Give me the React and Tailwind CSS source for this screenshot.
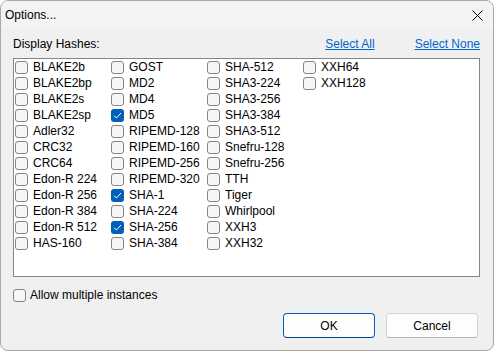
import React from "react";

const columns = [
  ["BLAKE2b", "BLAKE2bp", "BLAKE2s", "BLAKE2sp", "Adler32", "CRC32", "CRC64", "Edon-R 224", "Edon-R 256", "Edon-R 384", "Edon-R 512", "HAS-160"],
  ["GOST", "MD2", "MD4", "MD5", "RIPEMD-128", "RIPEMD-160", "RIPEMD-256", "RIPEMD-320", "SHA-1", "SHA-224", "SHA-256", "SHA-384"],
  ["SHA-512", "SHA3-224", "SHA3-256", "SHA3-384", "SHA3-512", "Snefru-128", "Snefru-256", "TTH", "Tiger", "Whirlpool", "XXH3", "XXH32"],
  ["XXH64", "XXH128"],
];

const checked = ["MD5", "SHA-1", "SHA-256"];

const Box = ({ on }) =>
  on ? (
    <span className="w-[13px] h-[13px] rounded-[3px] bg-[#005fb8] flex items-center justify-center shrink-0">
      <svg width="9" height="7" viewBox="0 0 9 7">
        <path d="M1 3.6 L3.4 6 L8 1" fill="none" stroke="white" strokeWidth="1" />
      </svg>
    </span>
  ) : (
    <span className="w-[13px] h-[13px] rounded-[3px] border border-[#858585] bg-[#f6f6f6] shrink-0" />
  );

const Item = ({ label }) => (
  <div className="h-[16px] flex items-center pl-[1px] gap-[5px]">
    <Box on={checked.includes(label)} />
    <span className="leading-none">{label}</span>
  </div>
);

export default function App() {
  return (
    <div className="w-[494px] h-[351px] bg-white" style={{ fontFamily: "'Liberation Sans', Arial, sans-serif" }}>
      <div className="w-full h-full rounded-[8px] border border-[#a8a8a8] bg-[#f0f0f0] flex flex-col text-[12px] text-black overflow-hidden">
        <div className="h-[28px] flex items-center justify-between pl-[4px] pr-[10px] bg-[#f3f3f3]">
          <span>Options...</span>
          <svg width="11" height="11" viewBox="0 0 11 11">
            <path d="M0.5 0.5 L10.5 10.5 M10.5 0.5 L0.5 10.5" stroke="black" strokeWidth="1" />
          </svg>
        </div>

        <div className="flex-1 flex flex-col pl-[12px] pr-[13px] pt-[7px]">
          <div className="h-[16px] flex items-center">
            <span className="flex-1">Display Hashes:</span>
            <span className="text-[#0066cc] underline">Select All</span>
            <span className="text-[#0066cc] underline ml-[40px]">Select None</span>
          </div>

          <div className="mt-[6px] h-[219px] border border-[#82868e] bg-white flex">
            {columns.map((col, i) => (
              <div key={i} className="w-[96px] flex flex-col">
                {col.map((label) => (
                  <Item key={label} label={label} />
                ))}
              </div>
            ))}
          </div>

          <div className="mt-[11px] h-[14px] flex items-center gap-[4px]">
            <Box on={false} />
            <span>Allow multiple instances</span>
          </div>

          <div className="mt-[11px] flex justify-end gap-[11px] pr-[2px]">
            <button className="w-[92px] h-[25px] rounded-[4px] border border-[#005fb8] border-b-[#00468a] bg-[#fdfdfd]">
              OK
            </button>
            <button className="w-[92px] h-[25px] rounded-[4px] border border-[#d5d5d5] border-b-[#b5b5b5] bg-[#fdfdfd]">
              Cancel
            </button>
          </div>
        </div>
      </div>
    </div>
  );
}
